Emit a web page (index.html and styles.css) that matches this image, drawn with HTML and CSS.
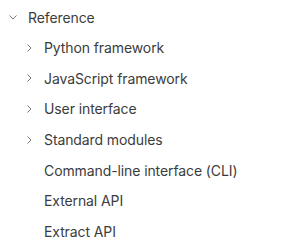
FILE: index.html
```html
<!DOCTYPE html>
<html lang="en">
<head>
    <meta charset="UTF-8">
    <meta name="viewport" content="width=device-width, initial-scale=1.0">
    <title>Reference</title>
    <link rel="stylesheet" href="styles.css">
</head>
<body>
    <ul class="tree">
        <li class="row">
            <span class="chev"><svg width="10" height="10" viewBox="0 0 10 10"><path d="M1.5 3.5 L5 7 L8.5 3.5" /></svg></span>
            <span class="label">Reference</span>
        </li>
        <li class="row child">
            <span class="chev"><svg width="10" height="10" viewBox="0 0 10 10"><path d="M3.5 1.5 L7 5 L3.5 8.5" /></svg></span>
            <span class="label">Python framework</span>
        </li>
        <li class="row child">
            <span class="chev"><svg width="10" height="10" viewBox="0 0 10 10"><path d="M3.5 1.5 L7 5 L3.5 8.5" /></svg></span>
            <span class="label">JavaScript framework</span>
        </li>
        <li class="row child">
            <span class="chev"><svg width="10" height="10" viewBox="0 0 10 10"><path d="M3.5 1.5 L7 5 L3.5 8.5" /></svg></span>
            <span class="label">User interface</span>
        </li>
        <li class="row child">
            <span class="chev"><svg width="10" height="10" viewBox="0 0 10 10"><path d="M3.5 1.5 L7 5 L3.5 8.5" /></svg></span>
            <span class="label">Standard modules</span>
        </li>
        <li class="row child">
            <span class="chev"></span>
            <span class="label">Command-line interface (CLI)</span>
        </li>
        <li class="row child">
            <span class="chev"></span>
            <span class="label">External API</span>
        </li>
        <li class="row child">
            <span class="chev"></span>
            <span class="label">Extract API</span>
        </li>
    </ul>
</body>
</html>
```

FILE: styles.css
```css
body {
    margin: 0;
    background-color: #fff;
    font-family: Inter, "Noto Sans", sans-serif;
    color: #3c3c3c;
}
.tree {
    list-style: none;
    margin: 0;
    padding: 2px 0 0 8px;
}
.row {
    display: flex;
    align-items: center;
    height: 30.57px;
    font-size: 14px;
    letter-spacing: -0.1px;
}
.row.child {
    padding-left: 16px;
}
.chev {
    width: 20px;
    height: 10px;
    display: flex;
    align-items: center;
}
.chev svg path {
    fill: none;
    stroke: #777;
    stroke-width: 1;
}
.label {
    white-space: nowrap;
}
```
